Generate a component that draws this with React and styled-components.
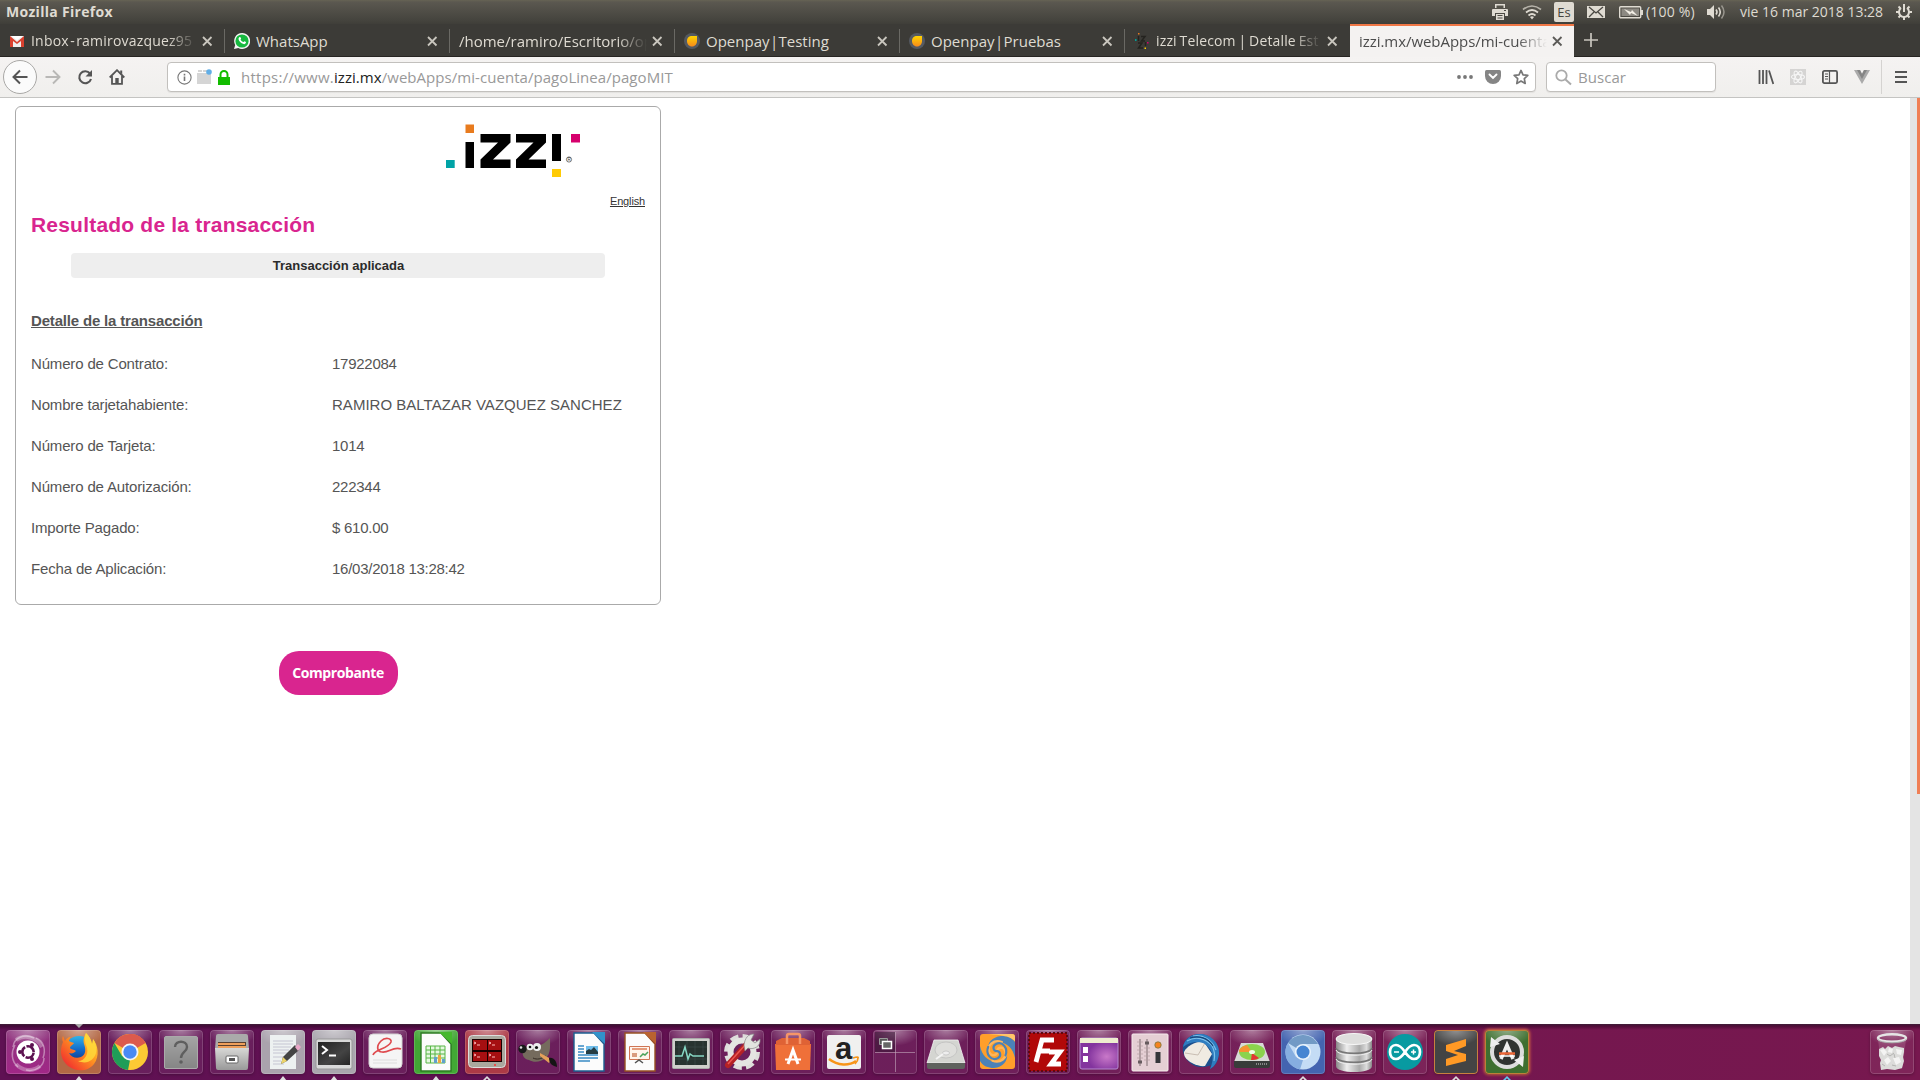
import React from "react";
import styled, { createGlobalStyle, css } from "styled-components";

const Global = createGlobalStyle`
  * { box-sizing: border-box; }
  body { margin: 0; background: #fff; overflow: hidden; }
`;

const ui = '"Open Sans", "Noto Sans", sans-serif';

const Screen = styled.div`
  width: 1920px;
  height: 1080px;
  display: flex;
  flex-direction: column;
  font-family: ${ui};
  font-size: 14px;
`;

/* ---------- desktop panel ---------- */
const Panel = styled.header`
  height: 24px;
  display: flex;
  align-items: center;
  padding: 0 8px 0 6px;
  color: #dfdbd2;
  background: linear-gradient(#666354 0, #5b5850 2px, #45443e 20px, #3f3e39 24px);
  line-height: 24px;
`;
const PanelTitle = styled.strong`
  flex: 1;
  font-size: 14px;
  letter-spacing: 0.3px;
`;
const PanelIcon = styled.span`
  display: flex;
  width: ${(p) => p.$w}px;
  margin-right: ${(p) => p.$gap}px;
`;
const PanelText = styled.span`
  width: ${(p) => p.$w}px;
  margin-right: ${(p) => p.$gap}px;
  letter-spacing: ${(p) => p.$ls || 0}px;
  white-space: nowrap;
`;
const Keyboard = styled.span`
  width: 20px;
  height: 20px;
  margin-right: 13px;
  border-radius: 2px;
  background: #dfdbd2;
  color: #45443e;
  font-size: 13px;
  line-height: 20px;
  text-align: center;
`;

/* ---------- browser tabs ---------- */
const TabStrip = styled.nav`
  height: 33px;
  display: flex;
  background: #3c3b37;
  border-bottom: 1px solid #272522;
`;
const Tab = styled.div`
  position: relative;
  width: ${(p) => (p.$active ? 224 : 225)}px;
  height: ${(p) => (p.$active ? 33 : 32)}px;
  display: flex;
  align-items: center;
  padding: 1px ${(p) => (p.$active ? 9 : 10)}px 0 9px;
  color: ${(p) => (p.$active ? "#4c4c4c" : "#dfdbd2")};
  ${(p) =>
    p.$active
      ? css`
          background: #f4f2f1;
          box-shadow: inset 0 2px #f07746;
        `
      : css`
          &::after {
            content: "";
            position: absolute;
            right: 0;
            top: 5px;
            width: 1px;
            height: 24px;
            background: #6a6964;
            opacity: ${p.$last ? 0 : 1};
          }
        `}
`;
const Favicon = styled.span`
  display: flex;
  width: 16px;
  margin-right: 6px;
`;
const TabLabel = styled.span`
  flex: 1;
  min-width: 0;
  white-space: nowrap;
  margin-right: 2px;
  line-height: 24px;
  font-size: ${(p) => p.$size || 15}px;
  letter-spacing: ${(p) => p.$ls || 0}px;
  word-spacing: ${(p) => p.$ws || 0}px;
  ${(p) => p.$fade && css`mask-image: linear-gradient(to left, transparent, #000 30px);`}
`;
const NewTab = styled.div`
  display: flex;
  align-items: center;
  padding: 0 0 0 10px;
`;

/* ---------- navigation toolbar ---------- */
const Toolbar = styled.div`
  height: 41px;
  display: flex;
  align-items: center;
  padding: 0 12px 0 3px;
  background: linear-gradient(#f5f3f2, #f0efed);
  border-bottom: 1px solid #c4c4c2;
`;
const Back = styled.span`
  width: 34px;
  height: 34px;
  display: grid;
  place-items: center;
  border: 1px solid #a9a8a6;
  border-radius: 50%;
  background: #fbfbfb;
`;
const Tool = styled.span`
  display: flex;
  margin-left: ${(p) => p.$ml}px;
`;
const Field = styled.div`
  width: ${(p) => p.$w}px;
  height: 30px;
  margin-left: ${(p) => p.$ml}px;
  padding: 0 ${(p) => p.$pr || 0}px 0 ${(p) => p.$pl}px;
  display: flex;
  align-items: center;
  border: 1px solid #c2c0bd;
  border-radius: 4px;
  background: #fff;
  box-shadow: 0 1px 1px rgba(0, 0, 0, 0.06);
`;
const Address = styled.span`
  flex: 1;
  margin-left: ${(p) => p.$ml}px;
  color: #999;
  font-size: 15px;
  white-space: nowrap;
  letter-spacing: 0.05px;
  b { font-weight: 400; color: #222; }
`;
const Scheme = styled.span`
  letter-spacing: 0.25px;
`;
const Divider = styled.span`
  width: 1px;
  height: 34px;
  margin-left: 11px;
  background: #d5d3d1;
`;

/* ---------- page ---------- */
const Viewport = styled.main`
  flex: 1;
  display: flex;
  justify-content: space-between;
  background: #fff;
`;
const Page = styled.div`
  width: 646px;
  margin: 8px 0 0 15px;
  display: flex;
  flex-direction: column;
  align-items: center;
  font-family: "Liberation Sans", Arial, sans-serif;
`;
const Receipt = styled.section`
  width: 646px;
  height: 499px;
  padding: 0 15px;
  display: flex;
  flex-direction: column;
  border: 1px solid #aaa;
  border-radius: 6px;
  color: #555;
  font-size: 15px;
`;
const LogoRow = styled.div`
  height: 88px;
  padding: 15px 0 0 414px;
`;
const Language = styled.a`
  align-self: flex-end;
  height: 13px;
  color: #333;
  font-size: 11px;
  letter-spacing: -0.15px;
  line-height: 13px;
  text-decoration: underline;
`;
const Title = styled.h1`
  margin: 4px 0 0;
  color: #d9258f;
  font-size: 21px;
  letter-spacing: 0.2px;
  line-height: 26px;
`;
const Notice = styled.div`
  width: 534px;
  height: 25px;
  margin: 15px 0 0 40px;
  padding-left: 1px;
  border-radius: 4px;
  background: #eee;
  color: #2b2b2b;
  font-size: 13px;
  font-weight: 700;
  line-height: 26px;
  text-align: center;
`;
const Subtitle = styled.h2`
  margin: 33px 0 12px;
  font-size: 15px;
  letter-spacing: -0.18px;
  line-height: 20px;
  text-decoration: underline;
`;
const Detail = styled.div`
  height: 41px;
  display: grid;
  grid-template-columns: 301px 1fr;
  align-items: center;
  white-space: nowrap;
  letter-spacing: -0.16px;
`;
const Value = styled.span`
  letter-spacing: ${(p) => (p.$caps ? 0.02 : -0.26)}px;
`;
const Voucher = styled.button`
  width: 119px;
  height: 44px;
  margin-top: 46px;
  padding: 0;
  border: 0;
  border-radius: 20px;
  background: #d9258f;
  color: #fff;
  font: 700 14px/44px ${ui};
  letter-spacing: -0.4px;
`;
const ScrollTrack = styled.div`
  width: 10px;
  display: flex;
  justify-content: flex-end;
  background: #e4e4e4;
`;
const ScrollThumb = styled.div`
  width: 3px;
  height: 696px;
  background: #f07f55;
`;

/* ---------- launcher ---------- */
const Dock = styled.footer`
  height: 56px;
  display: flex;
  gap: 7px;
  padding: 6px 6px 0;
  background: linear-gradient(#3e2038 0, rgba(40, 0, 30, 0.5) 2px, transparent 6px),
    linear-gradient(90deg, #5f1153 0, #641150 50%, #74174f 75%, #77184f 100%);
`;
const Tile = styled.div`
  position: relative;
  width: 44px;
  height: 44px;
  margin-left: ${(p) => (p.$end ? "auto" : 0)};
  border-radius: 4px;
  background: radial-gradient(ellipse 26px 16px at 50% 0, rgba(255, 255, 255, 0.42), transparent),
    ${(p) => p.$bg || "rgba(255,255,255,0.06)"};
  box-shadow: inset 0 0 0 1px ${(p) => p.$edge || "rgba(255,255,255,0.16)"}, 0 1px 3px rgba(0, 0, 0, 0.25)
    ${(p) => (p.$glow ? ", 0 0 3px 1px #e8714a" : "")};
  svg { display: block; }
`;
const Pip = styled.i`
  position: absolute;
  left: 18px;
  bottom: -7px;
  width: 8px;
  height: 5px;
  background: ${(p) => p.$color || "#ddd"};
  clip-path: ${(p) =>
    p.$open
      ? "polygon(50% 0, 100% 80%, 100% 100%, 80% 100%, 50% 45%, 20% 100%, 0 100%, 0 80%)"
      : "polygon(50% 0, 100% 100%, 0 100%)"};
`;
const TopPip = styled(Pip)`
  bottom: auto;
  top: -6px;
  height: 4px;
  background: #aaa;
  clip-path: polygon(0 0, 100% 0, 50% 100%);
`;
const SharedDefs = styled.svg`
  position: absolute;
  width: 0;
  height: 0;
`;

const Svg = ({ w = 16, h = w, box, children, ...rest }) => (
  <svg width={w} height={h} viewBox={box || `0 0 ${w} ${h}`} fill="none" {...rest}>
    {children}
  </svg>
);

const Cross = ({ color = "#c9c6be" }) => (
  <Svg stroke={color} strokeWidth="1.8">
    <path d="M4 4l8.5 8.5M12.500 4L4 12.500" />
  </Svg>
);

const Gmail = () => (
  <Svg>
    <path d="M1 3h14v11H1z" fill="#eee" />
    <path d="M1 3l7 6 7-6v11h-3V8l-4 3-4-3v6H1z" fill="#d9412f" />
    <path d="M2.500 3h11L8 7.300z" fill="#fff" />
  </Svg>
);
const WhatsApp = () => (
  <Svg>
    <path d="M8 0a8 8 0 1 1-3.700 15L0 16l1.200-4A8 8 0 0 1 8 0z" fill="#f4f4f4" />
    <circle cx="8" cy="8" r="6.600" fill="#16b83f" />
    <path d="M5.300 4.300c1-.8 1.500.3 1.800 1.300 0 .6-.8.900-.4 1.300.6 1.100 1.400 1.800 2.500 2.200.6 0 .8-1 1.300-.8l1.500.8c0 1.700-1.400 2.200-2.400 2C6.900 10.500 4.700 8 4.500 6c0-.7.300-1.300.8-1.700z" fill="#fff" />
  </Svg>
);
const OpenpayIcon = () => (
  <Svg>
    <circle cx="8" cy="8" r="8" fill="#555a62" />
    <path d="M3 8c0-3.500 2-5 5-5h5v5c0 3-2 5.500-5 5.500S3 11 3 8z" fill="url(#sun)" />
  </Svg>
);
const IzziIcon = () => (
  <Svg>
    <g stroke="#24231f" strokeWidth="1.500">
      <path d="M4.500 3v5M7 3.500h4L7.500 8H11M4 10h4l-3.500 5H9M11.500 9v4" />
    </g>
    <path d="M4 0h1.500v1.500H4z" fill="#e87b1e" />
    <path d="M1 6h1.500v2H1z" fill="#00a19a" />
    <path d="M13 9h1.500v1.500H13z" fill="#d6006d" />
    <path d="M10.500 14.500H12V16h-1.500z" fill="#ffcb05" />
  </Svg>
);

const tabs = [
  { icon: <Gmail />, label: "Inbox - ramirovazquez95", fade: true, size: 14, ls: 0.2, ws: -2.5 },
  { icon: <WhatsApp />, label: "WhatsApp" },
  { label: "/home/ramiro/Escritorio/op", fade: true },
  { icon: <OpenpayIcon />, label: "Openpay | Testing", ws: -3.5 },
  { icon: <OpenpayIcon />, label: "Openpay | Pruebas", ws: -3.5 },
  { icon: <IzziIcon />, label: "izzi Telecom | Detalle Est", fade: true, last: true, size: 14, ls: 0.15, ws: -1 },
  { label: "izzi.mx/webApps/mi-cuenta", fade: true, active: true, ls: -0.05 },
];

const details = [
  ["Número de Contrato:", "17922084"],
  ["Nombre tarjetahabiente:", "RAMIRO BALTAZAR VAZQUEZ SANCHEZ"],
  ["Número de Tarjeta:", "1014"],
  ["Número de Autorización:", "222344"],
  ["Importe Pagado:", "$ 610.00"],
  ["Fecha de Aplicación:", "16/03/2018 13:28:42"],
];

/* ---------- launcher icons, drawn on a 44px grid ---------- */
const Ubuntu = () => (
  <>
    <path d="M7 17C8 8 18 3 28 8M12 37C5 31 5 22 9 15M38 28c0 8-8 14-18 12M30 8c8 3 10 12 7 20" stroke="#fff" strokeOpacity=".4" strokeWidth="1.500" />
    <path d="M10 10C18 4 31 7 36 17M34 36c-7 6-18 5-24-2" stroke="#fff" strokeOpacity=".3" strokeWidth="4" />
    <circle cx="22" cy="22" r="11.500" fill="#fff" />
    <circle cx="22" cy="22" r="5.700" stroke="#5c1150" strokeWidth="2.600" strokeDasharray="10.500 1.440" strokeDashoffset="-.7" />
    <g fill="#5c1150"><circle cx="14" cy="22" r="2" /><circle cx="26" cy="15" r="2" /><circle cx="26" cy="29" r="2" /></g>
  </>
);
const Firefox = () => (
  <>
    <circle cx="22" cy="20" r="14" fill="url(#globe)" />
    <path d="M6 12c-4 9-2 18 5 24 8 6 20 6 26-2 6-8 4-19-1-25 0 3 0 4-1 5-1-5-3-8-6-11-2 4-3 6-2 11 2 5 2 11-3 13-5 2-10 0-12-4 3 1 5 0 7-2-2-2-5-1-6-3 0-2 3-3 4-5-2-1-4-1-5-2 0-2 1-3 2-4-3 0-5 2-6 4-1-2-1-3-2-5-1 2-1 4 0 6z" fill="url(#flame)" />
    <path d="M29 3c-2 5-1 8 0 12 4 8-1 16-8 16 9 4 16-1 18-8 1-6-1-11-3-14l-1 5c-1-5-3-8-6-11z" fill="#ffd83a" opacity=".85" />
  </>
);
const Chrome = () => (
  <>
    <circle cx="22" cy="22" r="18" fill="#fcc934" />
    <path d="M22 22L6.400 13a18 18 0 0 1 31.200 0z" fill="#dc5a4c" />
    <path d="M22 4a18 18 0 0 1 15.600 9H22z" fill="#dc5a4c" />
    <path d="M6.400 13L14 26l8 4-2 10A18 18 0 0 1 6.400 13z" fill="#1f9d58" />
    <circle cx="22" cy="22" r="8.500" fill="#f5f5f5" />
    <circle cx="22" cy="22" r="6.700" fill="#4a8af4" />
  </>
);
const Unknown = () => (
  <>
    <rect x="5.500" y="6.500" width="33" height="32" rx="1.500" fill="url(#steel)" stroke="#aaa" />
    <path d="M16 17c0-7 12-7 12 0 0 5-6 5-6 11" stroke="#5f5f5f" strokeWidth="2.400" />
    <circle cx="22" cy="32" r="1.800" fill="#5f5f5f" />
  </>
);
const Files = () => (
  <>
    <path d="M6 6q0-2 2-2h28q2 0 2 2l1 13H5z" fill="#aaa" />
    <path d="M8 12h28v7H8z" fill="#5b4030" /><path d="M8 13h27v2H8zM8 16h28v3H8z" fill="#efa05c" />
    <path d="M5 18h34l-1 20q0 2-2 2H8q-2 0-2-2z" fill="url(#silver)" />
    <rect x="16" y="26" width="12" height="7" rx="1" fill="#fff" stroke="#666" /><path d="M19 29.500h6" stroke="#555" strokeWidth="3" />
  </>
);
const TextEditor = () => (
  <>
    <path d="M9 5h26v34H9z" fill="#edf1f1" />
    <path d="M12 11h20M12 14h20M12 17h18M12 20h16M12 23h15M12 27h12M12 31h8M12 34h11" stroke="#bbc" strokeWidth=".8" />
    <path d="M20 34l2-7 12-12 4 5-12 11z" fill="#444" /><path d="M20 34l2-7 4 4z" fill="#ecd46a" /><path d="M34 17l3-3 3 3-3 4z" fill="#e8a7c8" />
  </>
);
const Terminal = () => (
  <>
    <rect x="4" y="9" width="36" height="30" rx="2" fill="#d9d9d9" stroke="#999" />
    <path d="M6 12h32v23H6z" fill="url(#dark)" />
    <path d="M10 16l5 4-5 4M17 25.500h7" stroke="#fff" strokeWidth="2" />
  </>
);
const Viewer = () => (
  <>
    <rect x="6" y="4" width="33" height="34" rx="4" fill="#f5f5f5" stroke="#d3d3d3" />
    <path d="M10 25c2-6 15-6 18-13 1-4-6-5-10-1-5 5-4 11 1 11 7 1 11-6 19-3" stroke="#df4a4e" strokeWidth="1.700" />
    <path d="M10 30h24M10 33h24" stroke="#ddd" />
  </>
);
const Sheet = ({ color, dark, children }) => (
  <>
    <path d="M7 3h20l10 11v27H7z" fill="#fcfcfc" stroke={dark} strokeWidth="1.400" />
    <path d="M25 2h13v12z" fill={color} />
    {children}
  </>
);
const Calc = () => (
  <Sheet color="#45b82d" dark="#2c7a22">
    <path d="M12 16h19v17H12z" fill="#e5f8df" stroke="#56b545" /><path d="M12 20h19M12 24h19M12 28h19M16.500 16v17M21 16v17M26 16v17" stroke="#56b545" />
    <path d="M20 27h3v6h-3zM28 29h3v4h-3z" fill="#629fcd" /><path d="M24 25h3v8h-3z" fill="#eda743" />
  </Sheet>
);
const Writer = () => (
  <Sheet color="#3192ca" dark="#1c5f91">
    <path d="M11 16h6M11 19h6M11 22h6M11 25h20M11 28h20M11 31h12" stroke="#398bc4" strokeWidth="1.500" />
    <path d="M19 16h12v8H19z" fill="#6fbdea" /><path d="M19 24l0-3 3-2 2 1 3-3 4 5v2z" fill="#263d43" />
  </Sheet>
);
const Impress = () => (
  <Sheet color="#ba6330" dark="#985022">
    <path d="M11.500 16.500h20v13h-20z" fill="#fff4ec" stroke="#cf7554" /><path d="M14 19h15" stroke="#e59b7b" strokeWidth="2" /><path d="M14 23h5v4h-5z" fill="#d99b7e" /><path d="M22 27l3-3 2 1 3-3" stroke="#4da35c" strokeWidth="1.500" /><path d="M17 33l4-3 4 3" stroke="#555" strokeWidth="1.500" />
  </Sheet>
);
const Terminator = () => (
  <>
    <rect x="3.500" y="5.500" width="37" height="32" rx="4" fill="#aaa89e" stroke="#ddd" />
    <path d="M7 9h30v23H7z" fill="#190000" />
    <path d="M8 10h14v10H8zM23 10h13v10H23zM8 22h14v9H8zM23 22h13v9H23z" fill="#a60f11" />
    <path d="M9 12l2 1-2 1M24 12l2 1-2 1M9 24l2 1-2 1M24 24l2 1-2 1M12 15h3M27 15h3M12 27h3M27 27h3" stroke="#fbb" />
    <circle cx="30" cy="35" r="1" fill="#f33" />
  </>
);
const Gimp = () => (
  <>
    <path d="M8 17c5-1 8 1 13-1 5-1 9-4 13-8 0 8 1 15-4 20-5 4-12 5-17 2-6-1-8-6-5-13z" fill="#756b5d" />
    <circle cx="6.500" cy="19" r="4.200" fill="#191919" /><circle cx="5" cy="17.500" r="1.300" fill="#ddd" />
    <circle cx="14" cy="17" r="3.300" fill="#eee" /><circle cx="21" cy="17" r="4" fill="#eee" /><circle cx="14" cy="17" r="1.300" fill="#111" /><circle cx="20.500" cy="17.500" r="1.600" fill="#111" />
    <path d="M17 28c4 2 8 1 13-2" stroke="#342b24" /><path d="M24 23l11 6-2 4-9-7z" fill="#e4a05a" /><path d="M33 28c5-1 8 4 8 9-4-1-8-3-8-9z" fill="#151515" />
  </>
);
const Monitor = () => (
  <>
    <rect x="3.500" y="8.500" width="37" height="30" rx="1" fill="#cfd0cb" stroke="#aaa" />
    <path d="M6 11h32v24H6z" fill="#27332f" /><path d="M10 11v24M18 11v24M26 11v24M34 11v24M6 17h32M6 29h32" stroke="#3e4f4a" strokeWidth=".6" />
    <path d="M6 26h7l3-9 3 12 2-5 3 2h11" stroke="#86d8c4" strokeWidth="1.500" />
  </>
);
const Settings = () => (
  <>
    <circle cx="22" cy="22" r="15.500" stroke="#dededb" strokeWidth="5" strokeDasharray="8 4.200" />
    <circle cx="22" cy="22" r="11.500" stroke="#e5e5e2" strokeWidth="6" />
    <path d="M8 35l19-21" stroke="#b42225" strokeWidth="6" strokeLinecap="round" /><path d="M8 34l18-20" stroke="#ec5550" strokeWidth="1.500" />
    <path d="M24 15c1-7 4-11 10-11l-3 6 4 3 5-4c1 8-7 11-12 9l-3 3z" fill="#e2e4e0" stroke="#888" strokeWidth=".7" />
  </>
);
const Software = () => (
  <>
    <path d="M4 14h36l-1 26H5z" fill="#ef7039" /><path d="M5 11l6-3 22 0 6 3v4H5z" fill="#df6235" />
    <path d="M16 14V6q0-2 2-2h9q2 0 2 2v8" stroke="#f69567" strokeWidth="2.500" />
    <path d="M17 34l5-14 5 14" stroke="#fff" strokeWidth="3" /><path d="M14 29.500h16" stroke="#fff" strokeWidth="2" />
  </>
);
const Glyph = (props) => <text fontFamily="Liberation Sans, sans-serif" fontWeight="700" textAnchor="middle" {...props} />;
const Amazon = () => (
  <>
    <rect x="5" y="5" width="34" height="34" rx="2" fill="#f0f0ef" />
    <Glyph x="21.500" y="29" fontSize="31" fill="#222">a</Glyph>
    <path d="M7 29c9 7 20 7 27 2" stroke="#f79518" strokeWidth="2.500" /><path d="M31 28q6-2 5 0c0 2-1 4-3 6" stroke="#f79518" strokeWidth="1.700" />
  </>
);
const Workspaces = () => (
  <>
    <path d="M2 2h20v20H2z" fill="#30162d" opacity=".5" /><path d="M22.500 2v40M2 22.500h40" stroke="#c5a9bd" strokeOpacity=".6" />
    <path d="M6.500 8.500h8v6h-8z" fill="#555" stroke="#999" /><path d="M9.500 11.500h9v7h-9z" fill="#666" stroke="#fff" strokeWidth="1.500" />
  </>
);
const Drive = () => (
  <>
    <path d="M10 10h24l7 23H3z" fill="#d4d5d1" stroke="#f2f2f2" strokeWidth=".8" />
    <path d="M3 33h38v4q0 2-2 2H5q-2 0-2-2z" fill="#5f625e" />
    <ellipse cx="22" cy="20" rx="11" ry="8" fill="#dededb" stroke="#bbb" strokeWidth=".7" />
    <ellipse cx="22" cy="23" rx="3.500" ry="2" fill="#eee" stroke="#bbb" strokeWidth=".7" />
    <path d="M12 29l7-5" stroke="#f4f4f4" strokeWidth="2" />
  </>
);
const swirlArm = "M22 21C17 21 15 14 21 11 30 7 38 17 34 27";
const Swirl = () => (
  <>
    <rect x="5" y="4" width="35" height="35" rx="3" fill="#ff9f2b" />
    <path d="M14 4h23q3 0 3 3v4c-6-5-15-6-26-7z" fill="#ffc56a" />
    <path d="M40 12v16c-2-9-7-15-16-16-6 0-10 3-11 8-1-7 4-13 13-14 6 0 11 2 14 6z" fill="#4b82b8" />
    <path d="M5 31V16c2 9 7 15 16 16 6 0 10-3 11-8 1 7-4 13-13 14-6 0-11-2-14-7z" fill="#4b82b8" />
    <g strokeWidth="3" strokeLinecap="round">
      <path d={swirlArm} stroke="#ffb65a" transform="translate(5 5) scale(.78) rotate(90 22 21)" />
      <path d={swirlArm} stroke="#ffb65a" transform="translate(5 5) scale(.78) rotate(270 22 21)" />
      <path d={swirlArm} stroke="#4b82b8" transform="translate(6 6) scale(.72)" />
      <path d={swirlArm} stroke="#4b82b8" transform="translate(6 6) scale(.72) rotate(180 22 21)" />
    </g>
  </>
);
const FileZilla = () => (
  <>
    <path d="M3 3h38v38H3z" fill="#b10909" stroke="#5f0810" strokeWidth="2" strokeDasharray="2 2" />
    <path d="M28 10H16l-6 22M13 21h11M23 22h11L25 34h10" stroke="#fff" strokeWidth="4.800" />
  </>
);
const WindowIcon = () => (
  <>
    <rect x="3" y="8" width="38" height="31" rx="2" fill="url(#violet)" stroke="#b48bcf" /><path d="M3 8h38v5H3z" fill="#eeedcf" /><path d="M6 17h5v6H6zM6 26h5v6H6z" fill="#fff" />
  </>
);
const Mixer = () => (
  <>
    <rect x="4" y="4" width="36" height="37" rx="1" fill="#e5cfd4" stroke="#f7eaed" />
    <path d="M12 9v27M19 9v27" stroke="#7d6c70" />
    <path d="M9 12h6M9 16h6M9 20h6M9 24h6M9 28h6M16 18h6M16 22h6M16 26h6M16 30h6" stroke="#b49ca1" strokeWidth=".7" />
    <path d="M10 32h4M17 13h4" stroke="#665b5e" strokeWidth="3" />
    <circle cx="30" cy="15" r="3.200" fill="#f5821f" stroke="#774" strokeWidth=".8" /><path d="M27.500 22h5v11h-5z" fill="#35363a" />
  </>
);
const Thunderbird = () => (
  <>
    <path d="M4 16C7 5 18 2 27 5c10 4 15 13 12 23-1 5-4 9-8 11l1-4c-8 4-18 2-23-4C5 27 3 21 4 16z" fill="#1c4f8c" />
    <path d="M5 22c3-6 12-11 20-10l8 12-7 12c-7 1-17-4-20-9-1-2-1-3-1-5z" fill="#f0ebe2" />
    <path d="M6 23l13 2 7-12" stroke="#c9beb3" />
    <path d="M4 17c1-8 10-14 18-13 11 1 19 10 18 20-1 7-4 12-9 15 4-9 4-18-4-24-6-5-16-3-23 2z" fill="#2f7dc0" />
    <path d="M8 11c8-5 19-3 25 5 3 5 3 10 2 15M14 6c10-2 19 4 23 14" stroke="#7cc0ea" strokeWidth="1.200" />
    <path d="M11 8c9-3 18 0 23 8" stroke="#164478" strokeWidth="1.200" />
  </>
);
const DiskUsage = () => (
  <>
    <path d="M11 13h22l7 19H4z" fill="#d8dad6" /><path d="M4 31h36v5q0 2-2 2H6q-2 0-2-2z" fill="#383c3a" /><ellipse cx="22" cy="22" rx="13" ry="8" fill="#8bd34d" /><path d="M22 22l-13 0c0-4 4-6 8-7z" fill="#f69332" /><path d="M22 23l7 5c-3 2-6 2-8 2z" fill="#e33734" /><ellipse cx="22" cy="22" rx="3" ry="2" fill="#efffe5" />
    <path d="M26 34h11" stroke="#888" strokeWidth="2" strokeDasharray="1 1" />
  </>
);
const Chromium = () => (
  <>
    <circle cx="22" cy="22" r="17.500" fill="#c4dcf5" /><path d="M22 22L7 13a17.500 17.500 0 0 1 30 1H22z" fill="#729ac5" /><path d="M7 13l8 14 7 3-3 9.500A17.500 17.500 0 0 1 7 13z" fill="#86aee0" /><circle cx="22" cy="22" r="8" fill="#eaf3fb" /><circle cx="22" cy="22" r="6.500" fill="#4685d1" />
  </>
);
const Database = () => (
  <>
    <path d="M4 9v27c0 8 36 8 36 0V9z" fill="url(#barrel)" /><ellipse cx="22" cy="9" rx="18" ry="5.500" fill="#dededd" stroke="#f8f8f8" /><path d="M4 18c2 7 34 7 36 0M4 27c2 7 34 7 36 0" stroke="#777" strokeWidth="1.500" /><path d="M4 20c2 7 34 7 36 0M4 29c2 7 34 7 36 0" stroke="#eee" />
  </>
);
const Arduino = () => (
  <>
    <circle cx="22" cy="22" r="18" fill="#089aa1" /><path d="M22 22c-4-6-7-7-9-7-8 0-8 14 0 14 2 0 5-1 9-7 4-6 7-7 9-7 8 0 8 14 0 14-2 0-5-1-9-7z" stroke="#fff" strokeWidth="2.700" /><path d="M11 22h5M28 22h5M30.500 19.500v5" stroke="#fff" strokeWidth="1.500" />
  </>
);
const Sublime = () => <path d="M12 15l20-6v7l-12 5 12 3v7L12 36v-7l12-4-12-4z" fill="#ff9925" />;
const Updater = () => (
  <>
    <circle cx="22" cy="22" r="15" fill="#303331" stroke="#ddd" strokeWidth="4" /><path d="M5 17l1-10 9 7zM39 26l-1 11-9-7z" fill="#eee" />
    <path d="M16 29l6-14 6 14" stroke="#eee" strokeWidth="3.500" /><path d="M14 23.500h16" stroke="#eb6637" strokeWidth="2.500" /><path d="M14 26h16" stroke="#fff" strokeWidth="1.500" />
  </>
);
const Trash = () => (
  <>
    <path d="M8 10h28l-4 29H12z" fill="#fff" opacity=".14" />
    <path d="M9 19l4-2 2 2 3-3 4 2 3-2 4 1 5 1v4l-1 5 1 4-2 7-7 2-8-1-6 1-1-7 1-3-2-4z" fill="#dcdcda" />
    <path d="M10 20l4-1 3 3-3 4zM19 18l4 1-1 4-4-1zM26 19l6 1-1 5-4-1zM14 30l4-3 3 4-4 4zM23 28l6-1 2 5-5 3z" fill="#f4f4f3" />
    <path d="M17 24l3 2 4-3M12 34l3 2M22 35l4 1M24 24l1 4" stroke="#a9a9a7" strokeWidth=".8" />
    <ellipse cx="22" cy="8" rx="14" ry="3.700" stroke="#e6e6e6" strokeWidth="2.500" /><path d="M7.500 9c2 5 27 5 29 0" stroke="#aaa" />
  </>
);

const launcher = [
  { Icon: Ubuntu, bg: "linear-gradient(#8d347c,#a12787)" },
  { Icon: Firefox, bg: "#b36845", pip: "solid", top: true },
  { Icon: Chrome },
  { Icon: Unknown },
  { Icon: Files },
  { Icon: TextEditor, bg: "#aaa3ad", pip: "solid" },
  { Icon: Terminal, bg: "#aaa6ae", pip: "solid" },
  { Icon: Viewer },
  { Icon: Calc, bg: "#42a735", pip: "solid" },
  { Icon: Terminator, bg: "#ac3a46", pip: "open" },
  { Icon: Gimp },
  { Icon: Writer },
  { Icon: Impress },
  { Icon: Monitor },
  { Icon: Settings },
  { Icon: Software },
  { Icon: Amazon },
  { Icon: Workspaces },
  { Icon: Drive },
  { Icon: Swirl },
  { Icon: FileZilla },
  { Icon: WindowIcon },
  { Icon: Mixer },
  { Icon: Thunderbird },
  { Icon: DiskUsage },
  { Icon: Chromium, bg: "#4464b0", pip: "open" },
  { Icon: Database },
  { Icon: Arduino },
  { Icon: Sublime, bg: "#444", edge: "#c8803f", pip: "open" },
  { Icon: Updater, bg: "#3e6f30", edge: "#bd8038", glow: true, pip: "open", pipColor: "#61c7ec" },
  { Icon: Trash, end: true },
];

const stops = (list) => list.map(([o, c]) => <stop key={o} offset={o} stopColor={c} />);
const Gradients = () => (
  <SharedDefs aria-hidden="true">
    <defs>
      <linearGradient id="sun" x1="0" y1="0" x2="0" y2="1">{stops([[0, "#ffd400"], [1, "#f78a1c"]])}</linearGradient>
      <linearGradient id="globe" x1="0" y1="0" x2="0" y2="1">{stops([[0, "#30b4e8"], [0.5, "#1268c8"], [1, "#142f7c"]])}</linearGradient>
      <linearGradient id="flame" x1="1" y1="0" x2="0" y2="1">{stops([[0, "#ffec45"], [0.4, "#ff9b20"], [0.8, "#f4402c"], [1, "#d3184e"]])}</linearGradient>
      <linearGradient id="steel" x1="0" y1="0" x2="0" y2="1">{stops([[0, "#a5a5a5"], [1, "#858585"]])}</linearGradient>
      <linearGradient id="silver" x1="0" y1="0" x2="0" y2="1">{stops([[0, "#d8d8d6"], [1, "#999"]])}</linearGradient>
      <linearGradient id="dark" x1="0" y1="0" x2="1" y2="1">{stops([[0, "#222"], [0.6, "#444"], [1, "#252525"]])}</linearGradient>
      <radialGradient id="violet" cx=".7" cy=".6">{stops([[0, "#c979c9"], [1, "#83349e"]])}</radialGradient>
      <linearGradient id="barrel">{stops([[0, "#888"], [0.3, "#eee"], [0.65, "#aaa"], [0.85, "#ddd"], [1, "#888"]])}</linearGradient>
    </defs>
  </SharedDefs>
);

const IzziLogo = () => (
  <Svg w={140} h={60}>
    <path d="M20.500 2.500h8.500V11h-8.500z" fill="#e87b1e" />
    <path d="M1 38h8.700v8H1z" fill="#00a3a6" />
    <path d="M126 12h9v8.500h-9z" fill="#d6006d" />
    <path d="M107 47h9v8h-9z" fill="#ffcb05" />
    <path d="M20.500 20H29v26h-8.500zM107 12h9v27h-9zM35.500 12h30v8.500L48 37.500h17.500V46h-30v-8.500L53 20.500H35.500zM71 12h30v8.500L83.500 37.500H101V46H71v-8.500L88.500 20.500H71z" fill="#000" />
    <circle cx="124" cy="37.500" r="2.600" stroke="#444" strokeWidth=".7" />
    <text x="124" y="39.300" fontSize="4.500" textAnchor="middle" fill="#333" fontFamily="Liberation Sans, sans-serif">R</text>
  </Svg>
);

export default function App() {
  return (
    <Screen>
      <Global />
      <Gradients />
      <Panel>
        <PanelTitle>Mozilla Firefox</PanelTitle>
        <PanelIcon $w={16} $gap={14}>
          <Svg><path d="M3 0h10v4H3zM1 5h14q1 0 1 1v6h-3V9H3v3H0V6q0-1 1-1z" fill="#dfdbd2" /><path d="M4.500 1.500h7V5h-7z" fill="#55534b" /><path d="M4 10h8v6H4z" fill="#dfdbd2" /><path d="M5.500 11.500h5M5.500 14h5" stroke="#4b4943" /><path d="M12 6.500h2" stroke="#4b4943" /></Svg>
        </PanelIcon>
        <PanelIcon $w={20} $gap={12}>
          <Svg w={20} h={16}><g stroke="#dfdbd2" strokeWidth="1.700"><path d="M1 5.500q9-7 18 0" opacity=".7" /><path d="M4 8.500q6-5 12 0M6.500 11.500q3.500-3 7 0" /></g><path d="M8 13q2-1.500 4 0l-2 2.500z" fill="#dfdbd2" /></Svg>
        </PanelIcon>
        <Keyboard>Es</Keyboard>
        <PanelIcon $w={18} $gap={14}>
          <Svg w={18} h={12}><path d="M0 0h18v12H0z" fill="#dfdbd2" /><path d="M2 1l7 6 7-6M2 11l5-5M16 11l-5-5" stroke="#4b4943" strokeWidth="1.300" /></Svg>
        </PanelIcon>
        <PanelIcon $w={25} $gap={2}>
          <Svg w={25} h={14}><rect x=".7" y="1.700" width="21" height="11" rx="1" stroke="#dfdbd2" strokeWidth="1.400" /><path d="M2.500 3.500h17.500v7.500H2.500z" fill="#8c8982" /><path d="M22 5h2v5h-2z" fill="#dfdbd2" /><path d="M5 4l7 3 1-2 6 6-7-3-1 2z" fill="#f2eee5" /></Svg>
        </PanelIcon>
        <PanelText $w={50} $gap={11} $ls={0.2}>(100 %)</PanelText>
        <PanelIcon $w={20} $gap={13}>
          <Svg w={20} h={16}><path d="M0 5h3l4-4v14l-4-4H0z" fill="#dfdbd2" /><path d="M9 5.500q2 2.500 0 5M11.500 3.500q3.500 4.500 0 9" stroke="#dfdbd2" strokeWidth="1.600" /><path d="M14.500 1.500q5 6.500 0 13" stroke="#99968e" strokeWidth="1.500" /></Svg>
        </PanelIcon>
        <PanelText $w={144} $gap={12}>vie 16 mar 2018 13:28</PanelText>
        <PanelIcon $w={16} $gap={0}>
          <Svg stroke="#dfdbd2"><path d="M5 4a5 5 0 1 0 6 0" strokeWidth="2" /><path d="M8 0v8" strokeWidth="2" /><path d="M0 8h3M13 8h3M2.500 2.500l2 2M13.500 2.500l-2 2M2.500 13.500l2-2M13.500 13.500l-2-2M8 13v3" strokeWidth="2" /></Svg>
        </PanelIcon>
      </Panel>

      <TabStrip>
        {tabs.map((t, i) => (
          <Tab key={i} $active={t.active} $last={t.last}>
            {t.icon && <Favicon>{t.icon}</Favicon>}
            <TabLabel $fade={t.fade} $ls={t.ls} $ws={t.ws} $size={t.size}>{t.label}</TabLabel>
            <Cross color={t.active ? "#5c5b58" : undefined} />
          </Tab>
        ))}
        <NewTab>
          <Svg w={14} stroke="#c9c6be" strokeWidth="1.700"><path d="M7 0v14M0 7h14" /></Svg>
        </NewTab>
      </TabStrip>

      <Toolbar>
        <Back><Svg stroke="#555" strokeWidth="2"><path d="M15.500 8H1.500M8 1.500L1.500 8 8 14.500" /></Svg></Back>
        <Tool $ml={8}><Svg stroke="#b9b8b6" strokeWidth="1.900"><path d="M.5 8h14M8 1.500L14.500 8 8 14.500" /></Svg></Tool>
        <Tool $ml={16}><Svg><path d="M13 4.500A6 6 0 1 0 14 10" stroke="#555" strokeWidth="2.100" /><path d="M15 1v6.500H8.500z" fill="#555" /></Svg></Tool>
        <Tool $ml={16}><Svg><path d="M.7 8.500L8 1.200l7.300 7.300M3 7v7.800h10V7" stroke="#555" strokeWidth="1.800" /><path d="M6.300 9h3.400v6H6.300zM11.200 1.500h2v4l-2-2z" fill="#555" /></Svg></Tool>
        <Field $w={1369} $ml={42} $pl={9} $pr={6}>
          <Svg w={15}><circle cx="7.500" cy="7.500" r="6.600" stroke="#777" strokeWidth="1.100" /><path d="M7.500 6.500v4.500M7.500 3.800v1.600" stroke="#777" strokeWidth="1.600" /></Svg>
          <Tool $ml={5}><Svg w={15} h={16}><path d="M0 4h14v11H0zM1 1h4v2H1zM6 1h4v2H6z" fill="#d5d5d5" /><circle cx="12" cy="3" r="2.800" fill="#62aee6" /></Svg></Tool>
          <Tool $ml={6}><Svg w={12} h={15}><path d="M0 7h12v8H0z" fill="#12bc00" /><path d="M2.500 8V4.500a3.500 3.500 0 0 1 7 0V8" stroke="#12bc00" strokeWidth="2" /></Svg></Tool>
          <Address $ml={11}><Scheme>https://www.</Scheme><b>izzi.mx</b>/webApps/mi-cuenta/pagoLinea/pagoMIT</Address>
          <Svg w={16}><g fill="#777"><circle cx="2" cy="8" r="1.900" /><circle cx="8" cy="8" r="1.900" /><circle cx="14" cy="8" r="1.900" /></g></Svg>
          <Tool $ml={12}><Svg><path d="M1.500 1h13q1.500 0 1.500 1.500V7A8 8 0 0 1 0 7V2.500Q0 1 1.500 1z" fill="#858585" /><path d="M4.500 5.500L8 9l3.500-3.500" stroke="#fff" strokeWidth="1.900" strokeLinecap="round" /></Svg></Tool>
          <Tool $ml={12}><Svg><path d="M8 1.400l2 4.400 4.800.6-3.500 3.300.9 4.800L8 12.100l-4.200 2.400.9-4.800L1.200 6.400 6 5.800z" stroke="#777" strokeWidth="1.700" strokeLinejoin="round" /></Svg></Tool>
        </Field>
        <Field $w={170} $ml={10} $pl={8}>
          <Svg w={17}><circle cx="6.500" cy="6.500" r="5.200" stroke="#aaa" strokeWidth="1.800" /><path d="M10.500 10.500l5.500 5" stroke="#aaa" strokeWidth="2" /></Svg>
          <Address $ml={6}>Buscar</Address>
        </Field>
        <Tool $ml={42}><Svg stroke="#555" strokeWidth="1.800"><path d="M1.500 1v14M5 1v14M8.500 1v14M11 1.500L15.300 15" /></Svg></Tool>
        <Tool $ml={16}><Svg><path d="M0 0h16v16H0z" fill="#d5d4d3" /><g stroke="#f6f6f6" strokeWidth="1.100"><ellipse cx="8" cy="8" rx="6.500" ry="2.500" /><ellipse cx="8" cy="8" rx="6.500" ry="2.500" transform="rotate(60 8 8)" /><ellipse cx="8" cy="8" rx="6.500" ry="2.500" transform="rotate(120 8 8)" /></g></Svg></Tool>
        <Tool $ml={16}><Svg stroke="#555"><rect x=".9" y="1.900" width="14.200" height="12.200" rx="1.500" strokeWidth="1.800" /><path d="M7.500 2v12M3 5h3M3 7.500h3M3 10h3" strokeWidth="1.200" /></Svg></Tool>
        <Tool $ml={16}><Svg><path d="M0 1h6l2 4 2-4h6L8 15z" fill="#aaa" /><path d="M3 1h3l2 4 2-4h3L8 10z" fill="#858585" /></Svg></Tool>
        <Divider />
        <Tool $ml={12}><Svg w={14} h={14} stroke="#555" strokeWidth="1.900"><path d="M1 2h12M1 7h12M1 12h12" /></Svg></Tool>
      </Toolbar>

      <Viewport>
        <Page>
          <Receipt>
            <LogoRow><IzziLogo /></LogoRow>
            <Language>English</Language>
            <Title>Resultado de la transacción</Title>
            <Notice>Transacción aplicada</Notice>
            <Subtitle>Detalle de la transacción</Subtitle>
            {details.map(([name, value]) => (
              <Detail key={name}><span>{name}</span><Value $caps={/^[A-Z]/.test(value)}>{value}</Value></Detail>
            ))}
          </Receipt>
          <Voucher>Comprobante</Voucher>
        </Page>
        <ScrollTrack><ScrollThumb /></ScrollTrack>
      </Viewport>

      <Dock>
        {launcher.map(({ Icon, bg, edge, glow, pip, pipColor, top, end }, i) => (
          <Tile key={i} $bg={bg} $edge={edge} $glow={glow} $end={end}>
            <Svg w={44}><Icon /></Svg>
            {top && <TopPip />}
            {pip && <Pip $open={pip === "open"} $color={pipColor} />}
          </Tile>
        ))}
      </Dock>
    </Screen>
  );
}
